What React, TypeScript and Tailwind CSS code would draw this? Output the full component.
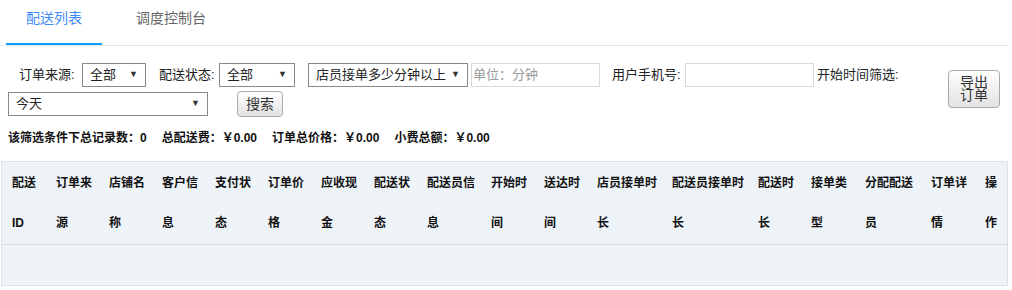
import React from "react";

const cols: { a: string; w?: number }[] = [
  { a: "配送ID", w: 44 },
  { a: "订单来源", w: 53 },
  { a: "店铺名称", w: 53 },
  { a: "客户信息", w: 53 },
  { a: "支付状态", w: 53 },
  { a: "订单价格", w: 53 },
  { a: "应收现金", w: 53 },
  { a: "配送状态", w: 53 },
  { a: "配送员信息", w: 64 },
  { a: "开始时间", w: 53 },
  { a: "送达时间", w: 53 },
  { a: "店员接单时长", w: 75 },
  { a: "配送员接单时长", w: 86 },
  { a: "配送时长", w: 53 },
  { a: "接单类型", w: 54 },
  { a: "分配配送员", w: 66 },
  { a: "订单详情", w: 54 },
  { a: "操作" },
];

function FakeSelect({ w, text, cls = "" }: { w: string; text: string; cls?: string }) {
  return (
    <div
      className={`${w} ${cls} h-[24px] shrink-0 border border-[#8a8a8a] bg-white flex items-center justify-between pl-[7px] pr-[7px] text-[13px] text-[#222]`}
    >
      <span>{text}</span>
      <span className="text-[9px] text-[#333]">▼</span>
    </div>
  );
}

export default function App() {
  return (
    <div className="font-[family-name:Liberation_Sans,Noto_Sans_CJK_SC,sans-serif] bg-white w-[1012px] h-[290px] overflow-hidden">
      <div className="ml-[1px] w-[1007px]">
        {/* Tabs */}
        <div className="flex h-[46px] border-b border-[#e4e4e4] pl-[5px]">
          <div className="h-[45px] pt-[8px] px-[20px] leading-[20px] text-[14px] text-[#3f8bfa] border-b-2 border-[#0b9eff]">
            配送列表
          </div>
          <div className="h-[45px] pt-[8px] ml-[14px] px-[20px] leading-[20px] text-[14px] text-[#666]">
            调度控制台
          </div>
        </div>

        {/* Filters */}
        <div className="flex pl-[7px]">
          <div className="flex-1">
            <div className="flex items-center mt-[17px] h-[24px] text-[13px] text-[#222] whitespace-nowrap">
              <span className="ml-[11px] w-[58px] shrink-0">订单来源:</span>
              <FakeSelect w="w-[64px]" text="全部" cls="ml-[5px]" />
              <span className="ml-[13px] w-[58px] shrink-0">配送状态:</span>
              <FakeSelect w="w-[76px]" text="全部" cls="ml-[2px]" />
              <FakeSelect w="w-[160px]" text="店员接单多少分钟以上" cls="ml-[13px]" />
              <div className="ml-[3px] w-[129px] h-[24px] shrink-0 border border-[#d9d9d9] bg-white flex items-center pl-[1px] text-[13px] text-[#999]">
                单位：分钟
              </div>
              <span className="ml-[12px] w-[71px] shrink-0">用户手机号:</span>
              <div className="ml-[2px] w-[129px] h-[24px] shrink-0 border border-[#d9d9d9] bg-white" />
              <span className="ml-[3px]">开始时间筛选:</span>
            </div>
            <div className="flex items-center mt-[4px] h-[26px]">
              <FakeSelect w="w-[200px]" text="今天" />
              <button className="ml-[29px] w-[46px] h-[26px] rounded-[4px] border border-[#a9a9a9] bg-gradient-to-b from-white to-[#e2e2e2] text-[14px] text-[#333] leading-none">
                搜索
              </button>
            </div>
          </div>
          <button className="mt-[24px] mr-[8px] w-[52px] h-[38px] rounded-[4px] border border-[#a9a9a9] bg-gradient-to-b from-white to-[#e2e2e2] px-[11px] text-[14px] leading-[13px] text-[#333]">
            导出订单
          </button>
        </div>

        {/* Summary */}
        <div className="pl-[7px] mt-[11px] h-[20px] leading-[20px] text-[12px] font-bold text-[#111] flex">
          <span>该筛选条件下总记录数：0</span>
          <span className="ml-[15px]">总配送费：￥0.00</span>
          <span className="ml-[15px]">订单总价格：￥0.00</span>
          <span className="ml-[15px]">小费总额：￥0.00</span>
        </div>

        {/* Table */}
        <div className="mt-[13px] border border-[#dce2e8] bg-[#eef3f8]">
          <table className="w-full table-fixed border-collapse">
            <colgroup>
              {cols.map((c, i) => (
                <col key={i} style={c.w ? { width: c.w } : undefined} />
              ))}
            </colgroup>
            <thead>
              <tr className="border-b border-[#d6dde5]">
                {cols.map((c, i) => (
                  <th
                    key={i}
                    className="text-left align-top font-bold text-[12px] leading-[40px] py-[1px] pl-[10px] pr-[2px] text-[#111]"
                  >
                    {c.a}
                  </th>
                ))}
              </tr>
            </thead>
            <tbody>
              <tr>
                <td colSpan={cols.length} className="h-[40px]" />
              </tr>
            </tbody>
          </table>
        </div>
      </div>
    </div>
  );
}
